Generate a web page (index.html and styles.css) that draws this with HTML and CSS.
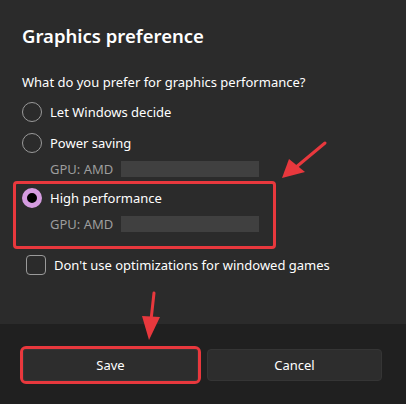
FILE: index.html
```html
<!DOCTYPE html>
<html lang="en">
<head>
	<meta charset="UTF-8">
	<title>Graphics preference</title>
	<link rel="stylesheet" href="styles.css">
</head>
<body>
	<div class="dialog">
		<div class="content">
			<h1 class="title">Graphics preference</h1>
			<p class="question">What do you prefer for graphics performance?</p>
			<label class="option">
				<span class="radio"></span>
				<span class="label">Let Windows decide</span>
			</label>
			<label class="option">
				<span class="radio"></span>
				<span class="label">Power saving</span>
			</label>
			<div class="gpu">GPU: AMD <span class="redacted"></span></div>
			<label class="option">
				<span class="radio checked"></span>
				<span class="label">High performance</span>
			</label>
			<div class="gpu">GPU: AMD <span class="redacted"></span></div>
			<label class="check">
				<span class="box"></span>
				<span class="label">Don't use optimizations for windowed games</span>
			</label>
		</div>
		<div class="footer">
			<button class="btn save">Save</button>
			<button class="btn">Cancel</button>
		</div>

		<!-- annotations -->
		<div class="mark"></div>
		<svg class="arrows" width="406" height="404" viewBox="0 0 406 404">
			<line x1="325" y1="143" x2="295" y2="168" stroke="#e8383d" stroke-width="3" stroke-linecap="round"/>
			<polygon points="282,178 289,159 305,172" fill="#e8383d"/>
			<line x1="154" y1="293" x2="151" y2="320" stroke="#e8383d" stroke-width="3" stroke-linecap="round"/>
			<polygon points="149,340 142,316 160,317" fill="#e8383d"/>
		</svg>
	</div>
</body>
</html>
```

FILE: styles.css
```css
html, body {
	margin: 0;
	padding: 0;
}
body {
	font-family: "Noto Sans", "Open Sans", sans-serif;
	color: #fff;
	background: #202020;
}
.dialog {
	width: 406px;
	height: 404px;
	position: relative;
	display: flex;
	flex-direction: column;
	background: #202020;
}
.content {
	height: 324px;
	box-sizing: border-box;
	padding: 22px 22px 0;
	background: #2b2b2b;
}
.title {
	margin: 0;
	font-size: 18.5px;
	font-weight: 600;
	line-height: 28px;
}
.question {
	margin: 22px 0 10px;
	font-size: 13px;
	line-height: 20px;
}
.option {
	display: flex;
	align-items: center;
	gap: 8px;
	height: 20px;
	margin-bottom: 11px;
	font-size: 13px;
}
.radio {
	width: 20px;
	height: 20px;
	box-sizing: border-box;
	border: 1px solid #9a9a9a;
	border-radius: 50%;
}
.radio.checked {
	border: 5px solid #d59ce0;
	background: #000;
}
.gpu {
	display: flex;
	align-items: center;
	margin: -5px 0 9px 28px;
	height: 20px;
	font-size: 13px;
	color: #9d9d9d;
}
.redacted {
	display: inline-block;
	width: 138px;
	height: 16px;
	margin-left: 8px;
	background: #404040;
}
.check {
	display: flex;
	align-items: center;
	gap: 8px;
	margin: 21px 0 0 4px;
	font-size: 13px;
}
.box {
	width: 20px;
	height: 20px;
	box-sizing: border-box;
	border: 1px solid #9a9a9a;
	border-radius: 4px;
}
.footer {
	flex: 1;
	display: flex;
	gap: 9px;
	padding: 25px 24px 0 23px;
}
.btn {
	flex: 1;
	height: 32px;
	font-family: inherit;
	font-size: 13px;
	color: #fff;
	background: #2d2d2d;
	border: 1px solid #353535;
	border-radius: 4px;
}
.save {
	outline: 3px solid #e8383d;
	border-radius: 3px;
}
.mark {
	position: absolute;
	left: 13px;
	top: 181px;
	width: 257px;
	height: 62px;
	border: 3px solid #e8383d;
	border-radius: 4px;
}
.arrows {
	position: absolute;
	left: 0;
	top: 0;
}
```
